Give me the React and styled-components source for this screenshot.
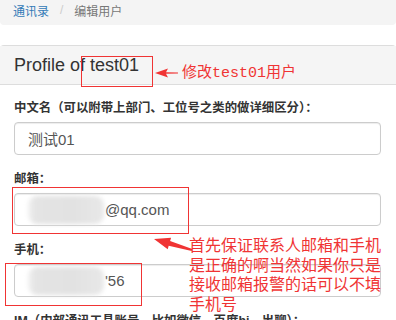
import React from "react";
import styled, { createGlobalStyle } from "styled-components";

const GlobalStyle = createGlobalStyle`
  body {
    margin: 0;
    background: #fff;
    font-family: "Liberation Sans", "Noto Sans CJK SC", sans-serif;
    color: #333;
  }
`

const Page = styled.div`
  position: relative;
  width: 396px;
  height: 320px;
  overflow: hidden;
`

const Breadcrumb = styled.ol`
  display: flex;
  align-items: center;
  gap: 11px;
  height: 25px;
  margin: 0 0 20px;
  padding: 0 13px 5px;
  box-sizing: border-box;
  list-style: none;
  background: #f4f4f4;
  border-radius: 0 0 4px 4px;
  font-size: 12px;
  li {
    color: #777;
  }
  a {
    color: #337ab7;
    text-decoration: none;
  }
  .sep {
    color: #ccc;
  }
`

const Panel = styled.section`
  border-top: 1px solid #ddd;
  border-radius: 4px 4px 0 0;
`

const PanelHeading = styled.h3`
  margin: 0;
  height: 38px;
  padding: 0 14px;
  display: flex;
  align-items: center;
  background: #f5f5f5;
  border-bottom: 1px solid #ddd;
  font-size: 18px;
  font-weight: normal;
  color: #333;
`

const PanelBody = styled.div`
  padding: 15px 15px 0 14px;
`

const FormGroup = styled.div`
  display: flex;
  flex-direction: column;
  gap: 5px;
  margin-bottom: 16px;
`

const Label = styled.label`
  font-size: 12.4px;
  line-height: 17px;
  font-weight: bold;
  color: #333;
  white-space: nowrap;
`

const Input = styled.div`
  display: flex;
  align-items: center;
  height: 33px;
  box-sizing: border-box;
  padding: 0 13px;
  border: 1px solid #ccc;
  border-radius: 4px;
  box-shadow: inset 0 1px 1px rgba(0, 0, 0, 0.075);
  font-size: 15px;
  color: #555;
`

const Blur = styled.span`
  display: inline-block;
  width: 76px;
  height: 28px;
  margin-right: 1px;
  border-radius: 9px;
  background: linear-gradient(to right, #f1f1f1, #e4e4e4 10%, #e2e2e2 60%, #e8e8e8);
  filter: blur(2px);
`

const RedBox = styled.div`
  position: absolute;
  border: 1px solid #f03434;
  box-sizing: border-box;
`

const Note = styled.div`
  position: absolute;
  color: #f03434;
  font-family: "Liberation Mono", "Noto Sans CJK SC", monospace;
  font-size: ${(p) => p.size}px;
  line-height: ${(p) => p.lh}px;
  white-space: nowrap;
`

const Arrow = styled.svg`
  position: absolute;
  overflow: visible;
`

export default function App() {
  return (
    <Page>
      <GlobalStyle />
      <Breadcrumb>
        <li><a href="#">通讯录</a></li>
        <li className="sep">/</li>
        <li>编辑用户</li>
      </Breadcrumb>
      <Panel>
        <PanelHeading>Profile of test01</PanelHeading>
        <PanelBody>
          <FormGroup>
            <Label>中文名（可以附带上部门、工位号之类的做详细区分）：</Label>
            <Input>测试01</Input>
          </FormGroup>
          <FormGroup>
            <Label>邮箱：</Label>
            <Input><Blur />@qq.com</Input>
          </FormGroup>
          <FormGroup>
            <Label>手机：</Label>
            <Input><Blur />'56</Input>
          </FormGroup>
          <FormGroup>
            <Label>IM（内部通讯工具账号，比如微信、百度hi、出聊）：</Label>
            <Input />
          </FormGroup>
        </PanelBody>
      </Panel>

      <RedBox style={{ left: 81, top: 56, width: 72, height: 31 }} />
      <Arrow style={{ left: 153, top: 66 }} width="28" height="14" viewBox="0 0 28 14">
        <polygon points="2,7 15,2.5 13,6.2 25,6.4 25,7.6 13,7.8 15,11.5" fill="#f03434" />
      </Arrow>
      <Note size={15} lh={18} style={{ left: 182, top: 65 }}>修改test01用户</Note>

      <RedBox style={{ left: 12, top: 187, width: 177, height: 47 }} />
      <RedBox style={{ left: 5, top: 263, width: 137, height: 43 }} />
      <Arrow style={{ left: 150, top: 230 }} width="45" height="25" viewBox="0 0 45 25">
        <polygon points="4,9 21.1,7.7 20.1,11.05 42.3,19 41.7,21 18.7,15.85 17.7,19.2" fill="#f03434" />
      </Arrow>
      <Note size={16} lh={19.5} style={{ left: 189, top: 238 }}>
        首先保证联系人邮箱和手机<br />
        是正确的啊当然如果你只是<br />
        接收邮箱报警的话可以不填<br />
        手机号
      </Note>
    </Page>
  );
}
